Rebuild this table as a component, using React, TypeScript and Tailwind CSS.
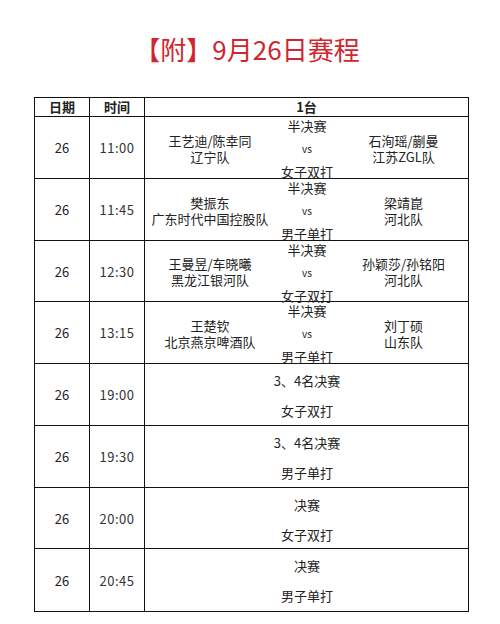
import React from "react";

type Row = {
  time: string;
  left?: [string, string];
  right?: [string, string];
  stage: string;
  event: string;
  semi: boolean;
};

const rows: Row[] = [
  { time: "11:00", left: ["王艺迪/陈幸同", "辽宁队"], right: ["石洵瑶/蒯曼", "江苏ZGL队"], stage: "半决赛", event: "女子双打", semi: true },
  { time: "11:45", left: ["樊振东", "广东时代中国控股队"], right: ["梁靖崑", "河北队"], stage: "半决赛", event: "男子单打", semi: true },
  { time: "12:30", left: ["王曼昱/车晓曦", "黑龙江银河队"], right: ["孙颖莎/孙铭阳", "河北队"], stage: "半决赛", event: "女子双打", semi: true },
  { time: "13:15", left: ["王楚钦", "北京燕京啤酒队"], right: ["刘丁硕", "山东队"], stage: "半决赛", event: "男子单打", semi: true },
  { time: "19:00", stage: "3、4名决赛", event: "女子双打", semi: false },
  { time: "19:30", stage: "3、4名决赛", event: "男子单打", semi: false },
  { time: "20:00", stage: "决赛", event: "女子双打", semi: false },
  { time: "20:45", stage: "决赛", event: "男子单打", semi: false },
];

const font = { fontFamily: '"Noto Sans CJK SC", "Noto Sans", sans-serif' };

export default function App() {
  return (
    <div className="w-[500px] h-[624px] bg-white text-[#222]" style={font}>
      <div className="pt-[35px] pr-[6px] text-center text-[26px] leading-[28px] text-[#d0262f]">【附】9月26日赛程</div>
      <div className="mt-[34px] ml-[34px] w-[435px] border-[1.5px] border-[#111]">
        <div className="flex h-[19px] border-b border-[#111] text-[13px] font-bold leading-[18px]">
          <div className="w-[55px] border-r-[1.5px] border-[#111] text-center">日期</div>
          <div className="w-[55px] border-r-[1.5px] border-[#111] text-center">时间</div>
          <div className="flex-1 text-center">1台</div>
        </div>
        {rows.map((r, i) => (
          <div
            key={i}
            className={`flex h-[61.75px] text-[13px] ${i < rows.length - 1 ? "border-b border-[#111]" : ""}`}
          >
            <div className="w-[55px] border-r-[1.5px] border-[#111] flex items-center justify-center pt-[1px]">26</div>
            <div className="w-[55px] border-r-[1.5px] border-[#111] flex items-center justify-center pt-[1px] tracking-[0.5px] text-[#333]">{r.time}</div>
            {r.semi ? (
              <div className="flex-1 flex">
                <div className="w-[130px] flex flex-col items-center justify-center pt-[3px] leading-[16px]">
                  <div>{r.left![0]}</div>
                  <div>{r.left![1]}</div>
                </div>
                <div className="w-[64px] flex flex-col items-center pt-[2px] gap-[10px] leading-[13px]">
                  <div className="h-[13px]">{r.stage}</div>
                  <div className="h-[13px] text-[10px]">vs</div>
                  <div className="h-[13px]">{r.event}</div>
                </div>
                <div className="flex-1 flex flex-col items-center justify-center pt-[3px] leading-[16px]">
                  <div>{r.right![0]}</div>
                  <div>{r.right![1]}</div>
                </div>
              </div>
            ) : (
              <div className="flex-1 flex">
                <div className="w-[130px]" />
                <div className="w-[64px] flex flex-col items-center pt-[9px] gap-[14px] leading-[16px] whitespace-nowrap">
                  <div className="h-[16px]">{r.stage}</div>
                  <div className="h-[16px]">{r.event}</div>
                </div>
                <div className="flex-1" />
              </div>
            )}
          </div>
        ))}
      </div>
    </div>
  );
}
